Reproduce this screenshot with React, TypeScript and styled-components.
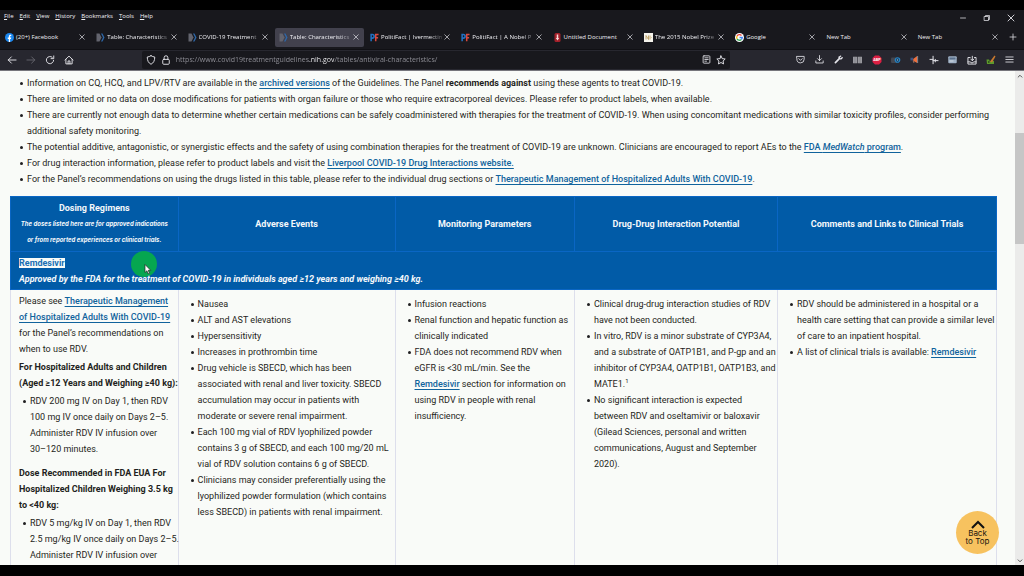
import React from "react";
import styled, { createGlobalStyle, css } from "styled-components";

const GlobalStyle = createGlobalStyle`
  * { box-sizing: border-box; }
  html, body { margin: 0; background: #000; }
  body { font-family: Roboto, Inter, "Liberation Sans", sans-serif; }
  button { font: inherit; color: inherit; background: none; border: 0; padding: 0; margin: 0; cursor: pointer; }
`;

const Screen = styled.div`
  display: flex;
  flex-direction: column;
  height: 100vh;
  padding: 10px 0 11px;
  background: #000;
  overflow: hidden;
`;

/* ---------- browser chrome ---------- */

const Chrome = styled.header`
  flex: none;
  background: #18181d;
  color: #f0f0f4;
  font-family: "Open Sans", "Noto Sans", sans-serif;
  font-size: 6px;
  line-height: 10px;
`;

const MenuRow = styled.div`
  display: flex;
  justify-content: space-between;
  height: 16px;
  padding: 1px 9px 0 4px;
`;

const Menu = styled.nav`
  display: flex;
  gap: 6px;
  height: 10px;
`;

const MenuButton = styled.button`
  &::first-letter { text-decoration: underline; }
`;

const WindowControls = styled.div`
  display: flex;
  gap: 16px;
  align-items: center;
  height: 14px;
`;

const IconButton = styled.button<{ $dim?: boolean }>`
  display: flex;
  flex: none;
  align-items: center;
  justify-content: center;
  color: ${(p) => (p.$dim ? "#65656d" : "#e4e4ea")};
  svg { display: block; }
`;

const TabStrip = styled.div`
  display: flex;
  align-items: center;
  height: 23px;
  padding: 1px 7px 2px 1px;
`;

const Tabs = styled.div`
  display: flex;
  flex: 1;
  min-width: 0;
  margin-right: 4px;
`;

const Tab = styled.div<{ $active?: boolean }>`
  display: flex;
  flex: 1 1 0;
  min-width: 0;
  align-items: center;
  gap: 2px;
  height: 19px;
  margin-right: 2px;
  padding: 0 5px 0 4px;
  border-radius: 2px;
  background: ${(p) => (p.$active ? "#42414d" : "transparent")};
  svg { flex: none; display: block; }
`;

const TabTitle = styled.button<{ $fade?: boolean }>`
  flex: 1;
  min-width: 0;
  white-space: nowrap;
  text-align: left;
  ${(p) =>
    p.$fade &&
    css`
      mask-image: linear-gradient(to right, #000 80%, rgba(0, 0, 0, 0.2) 100%);
    `}
`;

const Toolbar = styled.div`
  display: flex;
  align-items: center;
  height: 22px;
  padding: 0 5px 1px;
  background: #27272f;
  border-top: 1px solid #101014;
  border-bottom: 1px solid #76767c;
`;

const ToolGroup = styled.div`
  display: flex;
  flex: none;
`;

const ToolButton = styled(IconButton)<{ $wide?: boolean }>`
  width: ${(p) => (p.$wide ? 19 : 14)}px;
  height: 18px;
  margin-right: ${(p) => (p.$wide ? 0 : 5)}px;
`;

const Spacer = styled.div`
  flex: 0 1 6%;
`;

const UrlBar = styled.form`
  display: flex;
  flex: 1;
  align-items: center;
  gap: 5px;
  height: 18px;
  margin: 0;
  padding: 0 4px;
  border-radius: 2px;
  background: #18181d;
`;

const UrlInput = styled.input`
  flex: 1;
  min-width: 0;
  height: 14px;
  margin-left: 0;
  padding: 0;
  border: 0;
  outline: 0;
  font: 7px/14px "Open Sans", "Noto Sans", sans-serif;
  color: transparent;
  background: linear-gradient(to right, #94949c 133px, #fbfbfe 133px, #fbfbfe 158px, #94949c 158px);
  background-clip: text;
`;

/* ---------- page ---------- */

const Viewport = styled.div`
  display: flex;
  flex: 1;
  min-height: 0;
  position: relative;
  background: #f9fbf8;
`;

const Page = styled.main`
  flex: 1;
  min-width: 0;
  overflow: hidden;
  padding: 4px 18px 0 10px;
  color: #1f1f21;
  font-size: 9px;
  line-height: 16px;
  white-space: nowrap;
`;

const Bullets = styled.ul<{ $indent?: number; $gap?: number }>`
  list-style: none;
  margin: 0 0 ${(p) => p.$gap ?? 0}px;
  padding: 0 0 0 ${(p) => p.$indent ?? 11}px;
`;

const Bullet = styled.li`
  position: relative;
  &::before {
    content: "";
    position: absolute;
    top: 7px;
    left: -7px;
    width: 3px;
    height: 3px;
    border-radius: 50%;
    background: #1f1f21;
  }
`;

const Link = styled.a`
  color: #10639c;
  font-weight: 500;
  text-decoration: underline;
  text-underline-offset: 2px;
  text-decoration-thickness: 1px;
`;

const Table = styled.table`
  width: 100%;
  table-layout: fixed;
  border-collapse: collapse;
`;

const HeadCell = styled.th<{ $w: number }>`
  width: ${(p) => p.$w}%;
  height: 55px;
  padding: 0;
  border: 1px solid #0a66c4;
  background: #015ba7;
  color: #f4f8fb;
  font-weight: 700;
  text-align: center;
`;

const HeadNote = styled.em`
  display: block;
  font-family: Inter, Roboto, sans-serif;
  font-size: 6px;
`;

const DrugCell = styled.th`
  position: relative;
  height: 38px;
  padding: 0 8px;
  border: 1px solid #0a66c4;
  background: #015ba7;
  color: #f4f8fb;
  text-align: left;
  font-weight: 700;
`;

const Selected = styled.mark`
  padding: 0;
  background: #f9fbf8;
  color: #1a70b4;
`;

const Cell = styled.td<{ $list?: boolean }>`
  vertical-align: top;
  padding: ${(p) => (p.$list ? "6px 0 0 8px" : "3px 0 0 8px")};
  height: 300px;
  border: 1px solid #dddfec;
`;

const Para = styled.p<{ $bold?: boolean }>`
  margin: 0 0 2px;
  font-weight: ${(p) => (p.$bold ? 700 : 400)};
`;

const Pointer = styled.div`
  position: absolute;
  top: -1px;
  left: 120px;
  width: 26px;
  height: 26px;
  border-radius: 50%;
  background: #06a650;
  svg { position: absolute; left: 13px; top: 13px; }
`;

const DrugText = styled.span`
  position: relative;
`;

const Scrollbar = styled.div`
  display: flex;
  flex: none;
  flex-direction: column;
  align-items: center;
  width: 9px;
  background: #ebebea;
  color: #4a4a4a;
`;

const ScrollArrow = styled(IconButton)`
  width: 9px;
  height: 9px;
  color: #4c4c4c;
`;

const Track = styled.div`
  flex: 1;
  align-self: stretch;
  padding-top: 53px;
`;

const Thumb = styled.div`
  height: 111px;
  background: #c6c6c6;
`;

const BackToTop = styled.button`
  position: absolute;
  right: 25px;
  bottom: 11px;
  display: flex;
  flex-direction: column;
  align-items: center;
  justify-content: center;
  width: 43px;
  height: 43px;
  border-radius: 50%;
  background: #f7c25f;
  color: #1c1710;
  font-family: Inter, Roboto, sans-serif;
  font-size: 8px;
  line-height: 8px;
`;

/* ---------- icons ---------- */

type IconProps = { size?: number; children: React.ReactNode; sw?: number };
const Icon = ({ size = 10, sw = 1.5, children }: IconProps) => (
  <svg width={size} height={size} viewBox="0 0 16 16" fill="none" stroke="currentColor" strokeWidth={sw} strokeLinecap="round" strokeLinejoin="round" aria-hidden="true">
    {children}
  </svg>
);

const CloseIcon = ({ size = 6 }: { size?: number }) => (
  <Icon size={size} sw={1.8}><path d="M2 2l12 12M14 2L2 14" /></Icon>
);
const FacebookIcon = () => (
  <svg width="9" height="9" viewBox="0 0 18 18" aria-hidden="true">
    <circle cx="9" cy="9" r="9" fill="#1b87ee" />
    <path d="M7.6 18v-6.2H5.5V9h2.1V7.2c0-2.3 1.300-3.500 3.200-3.500.9 0 1.700.1 1.700.1v2.300h-1c-1 0-1.300.6-1.300 1.300V9h2.200l-.4 2.800h-1.800V18z" fill="#fff" />
  </svg>
);
const GuidelinesIcon = () => (
  <svg width="9" height="9" viewBox="0 0 18 18" aria-hidden="true">
    <path d="M1 1h6l4 8-4 8H1z" fill="#63646e" />
    <path d="M10 1h3l4 8-4 8h-3l4-8z" fill="#2d67a8" />
  </svg>
);
const PolitiIcon = () => (
  <svg width="9" height="9" viewBox="0 0 20 18" fill="none" strokeWidth="3.400" aria-hidden="true">
    <path d="M2.500 17.500V2.200h2.600a3.800 3.800 0 0 1 0 8.200H2.500" stroke="#2272c3" />
    <path d="M12.700 17.500V2.200H19M12.700 9.600h5.300" stroke="#d8493f" />
  </svg>
);
const DocIcon = () => (
  <svg width="9" height="9" viewBox="0 0 18 18" aria-hidden="true">
    <rect x="3" y="0" width="12" height="18" rx="3" fill="#a3202a" />
    <path d="M7.500 3h3v7h-3zM5.500 10h7L9 15z" fill="#f5dada" />
  </svg>
);
const NobelIcon = () => (
  <svg width="9" height="9" viewBox="0 0 18 18" aria-hidden="true">
    <rect width="18" height="18" fill="#f5f3ec" />
    <path d="M4 13V5l5 8V5M12 5v8M14.500 9h1" stroke="#b59452" strokeWidth="1.600" fill="none" />
  </svg>
);
const GoogleIcon = () => (
  <svg width="9" height="9" viewBox="0 0 18 18" aria-hidden="true">
    <circle cx="9" cy="9" r="9" fill="#fff" />
    <g fill="none" strokeWidth="2.600">
      <path d="M13 5A5.600 5.600 0 0 0 4.100 6.300" stroke="#ea4335" />
      <path d="M4.100 6.300a5.600 5.600 0 0 0 0 5.400" stroke="#fbbc05" />
      <path d="M4.100 11.700A5.600 5.600 0 0 0 12.800 13" stroke="#34a853" />
      <path d="M12.800 13a5.600 5.600 0 0 0 1.800-4H9" stroke="#4285f4" />
    </g>
  </svg>
);

const ICONS: Record<string, React.ReactNode> = {
  back: <Icon><path d="M14.500 8H2M7 3L2 8l5 5" /></Icon>,
  forward: <Icon><path d="M1.500 8H14M9 3l5 5-5 5" /></Icon>,
  reload: <Icon><path d="M13.800 8.500A5.800 5.800 0 1 1 11.500 3.500M14 1.500v4.300H9.700" /></Icon>,
  home: <Icon><path d="M1.500 8L8 1.800 14.500 8M3 7v7.200h10V7M6.500 14V9.500h3V14" /></Icon>,
  shield: <Icon><path d="M8 1.200C6.200 2.400 4.200 3 2 3.200 2 9 4 12.800 8 14.800c4-2 6-5.800 6-11.600C11.800 3 9.800 2.400 8 1.200z" /></Icon>,
  lock: <Icon><rect x="2.800" y="7" width="10.400" height="7.800" rx="1.500" /><path d="M5 7V4.200a3 3 0 0 1 6 0V7" /></Icon>,
  reader: <Icon size={9}><rect x="2" y="1.500" width="12" height="13" rx="1.500" /><path d="M5 5h6M5 8h6M5 11h3" /></Icon>,
  star: <Icon><path d="M8 1.500l2 4.300 4.700.6-3.400 3.200.8 4.700L8 12l-4.100 2.300.8-4.700L1.300 6.400 6 5.800z" /></Icon>,
  pocket: <Icon size={9}><path d="M1.500 2.500h13v5a6.500 6.500 0 0 1-13 0zM5 6.500l3 3 3-3" /></Icon>,
  download: <Icon size={9}><path d="M8 1v9M4.500 6.500L8 10l3.500-3.500M1.500 10.500v3.700h13v-3.700" /></Icon>,
  wrench: (
    <Icon size={9} sw={3}><path d="M2.500 13.500L9 7" /><path d="M9.200 3.500c-.5 2 1.300 3.800 3.500 3.200L14.500 5" strokeWidth="2.500" /><path d="M9.500 4L12 1.800" strokeWidth="2" /></Icon>
  ),
  book: (
    <svg width="9" height="8" viewBox="0 0 20 16" aria-hidden="true">
      <path d="M0 1h9.300v14H0zM10.700 1H20v14h-9.300z" fill="#9b9ba1" />
      <path d="M3 1v14M6 1v14M14 1v14M17 1v14" stroke="#7c7c82" />
    </svg>
  ),
  abp: (
    <svg width="10" height="10" viewBox="0 0 20 20" aria-hidden="true">
      <path d="M6 1h8l5 5v8l-5 5H6l-5-5V6z" fill="#dc1f43" />
      <text x="10" y="12.800" textAnchor="middle" fontSize="7.500" fontWeight="700" fontFamily="Roboto, sans-serif" fill="#fff">ABP</text>
    </svg>
  ),
  camera: (
    <svg width="10" height="8" viewBox="0 0 20 16" aria-hidden="true">
      <rect x="0" y="3" width="13" height="11" rx="2" fill="#43464f" />
      <circle cx="13" cy="8" r="4.500" fill="#17334d" stroke="#2584c6" strokeWidth="2.400" />
      <circle cx="13" cy="8" r="1.600" fill="#7fc0ea" />
    </svg>
  ),
  horn: (
    <svg width="9" height="9" viewBox="0 0 20 20" aria-hidden="true">
      <path d="M7 9L16 2v16l-9-5z" fill="#ef6f3c" />
      <path d="M16 2h2v16h-2z" fill="#8f8f98" />
      <path d="M1 6h6v6H1z" fill="#3f527f" />
      <path d="M6 13h3l1 4H7z" fill="#8a6a60" />
    </svg>
  ),
  plus: <Icon size={10} sw={1.6}><path d="M6.500 2v12M1.500 7h5M6.500 9h8M10 7v4" /></Icon>,
  card: (
    <svg width="9" height="8" viewBox="0 0 18 16" aria-hidden="true">
      <rect x="0.500" y="0.500" width="17" height="14" rx="2" fill="#9fb0c4" />
      <rect x="3" y="3" width="12" height="4" fill="#5a708c" />
      <path d="M3 10h8" stroke="#e2e6ea" strokeWidth="1.500" />
    </svg>
  ),
  inbox: <Icon size={10}><path d="M5 4H1.500v10.500h13V4H12M1.500 11h4l1 1.500h3l1-1.500h4M8.500 2v7M6 6.500L8.500 9 11 6.500" /></Icon>,
  leaf: (
    <svg width="10" height="10" viewBox="0 0 20 20" aria-hidden="true">
      <path d="M1 9h5l2 4 4-2 4 1v6H2z" fill="#5d9a2c" />
      <path d="M8 13L17 1l2 2-7 12z" fill="#c9792e" />
      <path d="M4 12h3v4H4z" fill="#31591b" />
    </svg>
  ),
  menu: <Icon size={9}><path d="M1.500 3.500h13M1.500 8h13M1.500 12.500h13" /></Icon>,
};

/* ---------- data ---------- */

const MENU = ["File", "Edit", "View", "History", "Bookmarks", "Tools", "Help"];

const TABS: { title: string; icon?: React.ReactNode; fade?: boolean; active?: boolean }[] = [
  { title: "(20+) Facebook", icon: <FacebookIcon /> },
  { title: "Table: Characteristics", icon: <GuidelinesIcon />, fade: true },
  { title: "COVID-19 Treatment", icon: <GuidelinesIcon />, fade: true },
  { title: "Table: Characteristics", icon: <GuidelinesIcon />, fade: true, active: true },
  { title: "PolitiFact | Ivermectin", icon: <PolitiIcon />, fade: true },
  { title: "PolitiFact | A Nobel P", icon: <PolitiIcon />, fade: true },
  { title: "Untitled Document", icon: <DocIcon /> },
  { title: "The 2015 Nobel Prize", icon: <NobelIcon />, fade: true },
  { title: "Google", icon: <GoogleIcon /> },
  { title: "New Tab" },
  { title: "New Tab" },
];

const EXTENSIONS: [string, string][] = [
  ["pocket", "Save to Pocket"],
  ["download", "Downloads"],
  ["wrench", "Tools"],
  ["book", "Library"],
  ["abp", "Adblock Plus"],
  ["camera", "Capture"],
  ["horn", "Announcements"],
  ["plus", "Adjust"],
  ["card", "Reader cards"],
  ["inbox", "Import"],
  ["leaf", "Notes"],
  ["menu", "Open application menu"],
];

const COLUMNS: [string, number][] = [
  ["Dosing Regimens", 17],
  ["Adverse Events", 22],
  ["Monitoring Parameters", 18.2],
  ["Drug-Drug Interaction Potential", 20.6],
  ["Comments and Links to Clinical Trials", 22.2],
];

const Lines = ({ of }: { of: React.ReactNode[] }) => (
  <>
    {of.map((line, i) => (
      <React.Fragment key={i}>
        {i > 0 && <br />}
        {line}
      </React.Fragment>
    ))}
  </>
);

const List = ({ items, indent, gap }: { items: React.ReactNode[][]; indent?: number; gap?: number }) => (
  <Bullets $indent={indent} $gap={gap}>
    {items.map((lines, i) => (
      <Bullet key={i}><Lines of={lines} /></Bullet>
    ))}
  </Bullets>
);

const INTRO: React.ReactNode[][] = [
  [<>Information on CQ, HCQ, and LPV/RTV are available in the <Link href="#archive">archived versions</Link> of the Guidelines. The Panel <b>recommends against</b> using these agents to treat COVID-19.</>],
  ["There are limited or no data on dose modifications for patients with organ failure or those who require extracorporeal devices. Please refer to product labels, when available."],
  [
    "There are currently not enough data to determine whether certain medications can be safely coadministered with therapies for the treatment of COVID-19. When using concomitant medications with similar toxicity profiles, consider performing",
    "additional safety monitoring.",
  ],
  [<>The potential additive, antagonistic, or synergistic effects and the safety of using combination therapies for the treatment of COVID-19 are unknown. Clinicians are encouraged to report AEs to the <Link href="#medwatch">FDA <i>MedWatch</i> program</Link>.</>],
  [<>For drug interaction information, please refer to product labels and visit the <Link href="#liverpool">Liverpool COVID-19 Drug Interactions website.</Link></>],
  [<>For the Panel’s recommendations on using the drugs listed in this table, please refer to the individual drug sections or <Link href="#management">Therapeutic Management of Hospitalized Adults With COVID-19</Link>.</>],
];

const ADVERSE = [
  ["Nausea"],
  ["ALT and AST elevations"],
  ["Hypersensitivity"],
  ["Increases in prothrombin time"],
  ["Drug vehicle is SBECD, which has been", "associated with renal and liver toxicity. SBECD", "accumulation may occur in patients with", "moderate or severe renal impairment."],
  ["Each 100 mg vial of RDV lyophilized powder", "contains 3 g of SBECD, and each 100 mg/20 mL", "vial of RDV solution contains 6 g of SBECD."],
  ["Clinicians may consider preferentially using the", "lyophilized powder formulation (which contains", "less SBECD) in patients with renal impairment."],
];

const MONITORING: React.ReactNode[][] = [
  ["Infusion reactions"],
  ["Renal function and hepatic function as", "clinically indicated"],
  ["FDA does not recommend RDV when", "eGFR is <30 mL/min. See the", <><Link href="#remdesivir">Remdesivir</Link> section for information on</>, "using RDV in people with renal", "insufficiency."],
];

const Sup = styled.sup`
  font-size: 6px;
  line-height: 0;
`;

const INTERACTIONS: React.ReactNode[][] = [
  ["Clinical drug-drug interaction studies of RDV", "have not been conducted."],
  ["In vitro, RDV is a minor substrate of CYP3A4,", "and a substrate of OATP1B1, and P-gp and an", "inhibitor of CYP3A4, OATP1B1, OATP1B3, and", <>MATE1.<Sup>1</Sup></>],
  ["No significant interaction is expected", "between RDV and oseltamivir or baloxavir", "(Gilead Sciences, personal and written", "communications, August and September", "2020)."],
];

const COMMENTS: React.ReactNode[][] = [
  ["RDV should be administered in a hospital or a", "health care setting that can provide a similar level", "of care to an inpatient hospital."],
  [<>A list of clinical trials is available: <Link href="#trials">Remdesivir</Link></>],
];

export default function App() {
  return (
    <Screen>
      <GlobalStyle />
      <Chrome>
        <MenuRow>
          <Menu>
            {MENU.map((m) => (
              <MenuButton key={m}>{m}</MenuButton>
            ))}
          </Menu>
          <WindowControls>
            <IconButton aria-label="Minimize"><Icon size={8}><path d="M3 8h10" /></Icon></IconButton>
            <IconButton aria-label="Restore"><Icon size={8}><path d="M3 5h8v8H3zM5 5V3h8v8h-2" /></Icon></IconButton>
            <IconButton aria-label="Close window"><CloseIcon size={8} /></IconButton>
          </WindowControls>
        </MenuRow>
        <TabStrip>
          <Tabs>
            {TABS.map((t, i) => (
              <Tab key={i} $active={t.active}>
                {t.icon}
                <TabTitle $fade={t.fade}>{t.title}</TabTitle>
                <IconButton aria-label={`Close ${t.title}`}><CloseIcon /></IconButton>
              </Tab>
            ))}
          </Tabs>
          <IconButton aria-label="New tab"><Icon size={8}><path d="M8 2v12M2 8h12" /></Icon></IconButton>
        </TabStrip>
        <Toolbar>
          <ToolGroup>
            <ToolButton aria-label="Back">{ICONS.back}</ToolButton>
            <ToolButton aria-label="Forward" $dim>{ICONS.forward}</ToolButton>
            <ToolButton aria-label="Reload">{ICONS.reload}</ToolButton>
            <ToolButton aria-label="Home">{ICONS.home}</ToolButton>
          </ToolGroup>
          <Spacer />
          <UrlBar onSubmit={(e) => e.preventDefault()}>
            <IconButton type="button" aria-label="Tracking protection">{ICONS.shield}</IconButton>
            <IconButton type="button" aria-label="Site information">{ICONS.lock}</IconButton>
            <UrlInput aria-label="Address" defaultValue="https://www.covid19treatmentguidelines.nih.gov/tables/antiviral-characteristics/" />
            <IconButton type="button" aria-label="Reader view">{ICONS.reader}</IconButton>
            <IconButton type="button" aria-label="Bookmark this page">{ICONS.star}</IconButton>
          </UrlBar>
          <Spacer />
          <ToolGroup>
            {EXTENSIONS.map(([id, label]) => (
              <ToolButton key={id} $wide aria-label={label}>{ICONS[id]}</ToolButton>
            ))}
          </ToolGroup>
        </Toolbar>
      </Chrome>

      <Viewport>
        <Page>
          <List items={INTRO} indent={17} gap={9} />
          <Table>
            <thead>
              <tr>
                {COLUMNS.map(([name, w], i) => (
                  <HeadCell key={name} $w={w} scope="col">
                    {name}
                    {i === 0 && (
                      <HeadNote>
                        <Lines of={["The doses listed here are for approved indications", "or from reported experiences or clinical trials."]} />
                      </HeadNote>
                    )}
                  </HeadCell>
                ))}
              </tr>
            </thead>
            <tbody>
              <tr>
                <DrugCell colSpan={5} scope="rowgroup">
                  <Pointer>
                    <svg width="8" height="11" viewBox="0 0 8 11" aria-hidden="true">
                      <path d="M1 0.500v8l1.900-1.700 1.300 3 1.300-.6-1.300-2.900h2.500z" fill="#fff" stroke="#222" strokeWidth="0.700" />
                    </svg>
                  </Pointer>
                  <Selected>Remdesivir</Selected>
                  <br />
                  <DrugText><i>Approved by the FDA for the treatment of COVID-19 in individuals aged ≥12 years and weighing ≥40 kg.</i></DrugText>
                </DrugCell>
              </tr>
              <tr>
                <Cell>
                  <Para>
                    <Lines
                      of={[
                        <>Please see <Link href="#management">Therapeutic Management</Link></>,
                        <Link href="#management">of Hospitalized Adults With COVID-19</Link>,
                        "for the Panel’s recommendations on",
                        "when to use RDV.",
                      ]}
                    />
                  </Para>
                  <Para $bold><Lines of={["For Hospitalized Adults and Children", "(Aged ≥12 Years and Weighing ≥40 kg):"]} /></Para>
                  <List gap={8} items={[["RDV 200 mg IV on Day 1, then RDV", "100 mg IV once daily on Days 2–5.", "Administer RDV IV infusion over", "30–120 minutes."]]} />
                  <Para $bold><Lines of={["Dose Recommended in FDA EUA For", "Hospitalized Children Weighing 3.5 kg", "to <40 kg:"]} /></Para>
                  <List items={[["RDV 5 mg/kg IV on Day 1, then RDV", "2.5 mg/kg IV once daily on Days 2–5.", "Administer RDV IV infusion over"]]} />
                </Cell>
                <Cell $list><List items={ADVERSE} /></Cell>
                <Cell $list><List items={MONITORING} /></Cell>
                <Cell $list><List items={INTERACTIONS} /></Cell>
                <Cell $list><List items={COMMENTS} /></Cell>
              </tr>
            </tbody>
          </Table>
        </Page>
        <Scrollbar>
          <ScrollArrow aria-label="Scroll up"><Icon size={6} sw={2.5}><path d="M3 11l5-5 5 5" /></Icon></ScrollArrow>
          <Track><Thumb /></Track>
          <ScrollArrow aria-label="Scroll down"><Icon size={6} sw={2.5}><path d="M3 5l5 5 5-5" /></Icon></ScrollArrow>
        </Scrollbar>
        <BackToTop>
          <svg width="14" height="9" viewBox="0 0 14 9" fill="none" stroke="#111" strokeWidth="2" aria-hidden="true">
            <path d="M1 8l6-6 6 6" />
          </svg>
          <Lines of={["Back", "to Top"]} />
        </BackToTop>
      </Viewport>
    </Screen>
  );
}
